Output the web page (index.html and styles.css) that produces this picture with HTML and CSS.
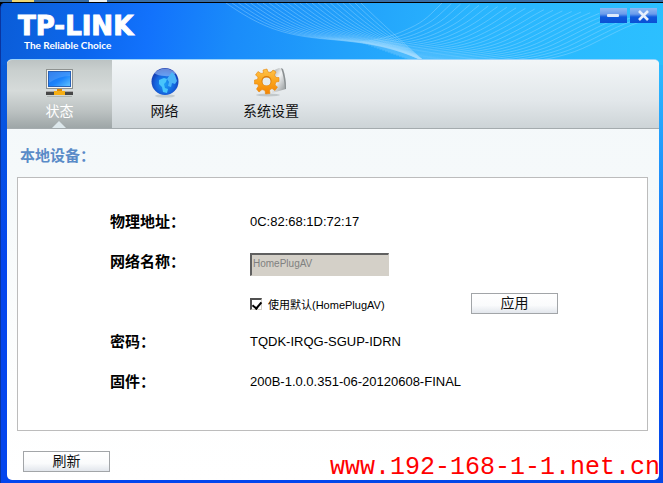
FILE: index.html
```html
<!DOCTYPE html>
<html lang="zh-CN">
<head>
    <meta charset="UTF-8">
    <meta name="viewport" content="width=device-width, initial-scale=1.0">
    <title>TP-LINK</title>
    <link rel="stylesheet" href="styles.css">
</head>
<body>
    <div class="desktop">
        <span class="desktop-icon folder"></span>
        <span class="desktop-icon file"></span>
    </div>

    <div class="window">
        <svg class="waves" id="waves" width="663" height="57" aria-hidden="true"></svg>

        <div class="header">
            <div class="brand">
                <div class="logo">TP-LINK</div>
                <div class="slogan">The Reliable Choice</div>
            </div>
            <div class="window-buttons">
                <button type="button" aria-label="最小化">
                    <svg width="27" height="15" viewBox="0 0 27 15"><rect x="7" y="6" width="12" height="3" rx="1" fill="#dce9fb"/></svg>
                </button>
                <button type="button" aria-label="关闭">
                    <svg width="27" height="15" viewBox="0 0 27 15"><path d="M9 3 L18 12 M18 3 L9 12" stroke="#e6effc" stroke-width="2.6"/></svg>
                </button>
            </div>
        </div>

        <div class="content">
            <div class="tabs">
                <button type="button" class="tab active">
                    <svg width="30" height="32" viewBox="0 0 30 32">
                        <defs>
                            <linearGradient id="screen" x1="0" y1="0" x2="1" y2="1">
                                <stop offset="0" stop-color="#1269e8"/>
                                <stop offset=".55" stop-color="#1d84fb"/>
                                <stop offset="1" stop-color="#63c6ff"/>
                            </linearGradient>
                        </defs>
                        <rect x="1.5" y="2.5" width="26" height="19" fill="#f5f5f2" stroke="#8e9290"/>
                        <rect x="3.5" y="4.5" width="22" height="15" fill="url(#screen)" stroke="#2862b8"/>
                        <path d="M4 5 H25 V9 Q14 9 4 16 Z" fill="#fff" opacity=".14"/>
                        <rect x="12" y="22" width="5" height="3" fill="#d98607"/>
                        <rect x="1" y="24" width="27" height="4" fill="#474747"/>
                        <rect x="1" y="24" width="27" height="1" fill="#a8a8a8"/>
                        <rect x="9" y="24" width="11" height="4" fill="#f6ae14"/>
                        <rect x="2" y="29" width="25" height="1" fill="#8e9592" opacity=".5"/>
                    </svg>
                    <span>状态</span>
                </button>
                <button type="button" class="tab">
                    <svg width="30" height="32" viewBox="0 0 30 32">
                        <defs>
                            <radialGradient id="globe" cx=".5" cy=".6" r=".58">
                                <stop offset="0" stop-color="#1b9df5"/>
                                <stop offset=".6" stop-color="#1565df"/>
                                <stop offset="1" stop-color="#1636aa"/>
                            </radialGradient>
                        </defs>
                        <ellipse cx="15" cy="29" rx="10" ry="1.6" fill="#aeb8bd" opacity=".6"/>
                        <circle cx="15" cy="14.500" r="13.500" fill="url(#globe)"/>
                        <path d="M4 6 Q15 -3 26 6 Q22 10 15 9 Q8 9 4 6Z" fill="#a9ccff" opacity=".55"/>
                        <path d="M9 13 L14 11 L17 12 L16 15 L14 17 L15 21 L18 22 L17 26 L13 25 L12 20 L9 17Z" fill="#48c4fb"/>
                        <path d="M19 9 L22 5 L25 8 L27 14 L25 17 L22 16 L21 20 L18 19 L19 15 L17 12Z" fill="#4bb4f7"/>
                    </svg>
                    <span>网络</span>
                </button>
                <button type="button" class="tab wide">
                    <svg width="34" height="32" viewBox="0 0 34 32">
                        <defs>
                            <linearGradient id="gear" x1="0" y1="0" x2="0" y2="1">
                                <stop offset="0" stop-color="#ffc34a"/>
                                <stop offset=".5" stop-color="#fba41b"/>
                                <stop offset="1" stop-color="#f38405"/>
                            </linearGradient>
                            <linearGradient id="metal" x1="0" y1="0" x2="1" y2="1">
                                <stop offset="0" stop-color="#8c9294"/>
                                <stop offset=".45" stop-color="#f2f4f5"/>
                                <stop offset="1" stop-color="#878c8e"/>
                            </linearGradient>
                        </defs>
                        <ellipse cx="14" cy="28" rx="12" ry="1.500" fill="#aab2b5" opacity=".6"/>
                        <path d="M16 5 L25 1 L29 2 Q32 11 32 22 L18 26 Z" fill="url(#metal)"/>
                        <path d="M27 1 L29 2 Q32 10 32 22 L31 22 Q30 9 27 1Z" fill="#8a9092"/>
                        <g fill="url(#gear)" stroke="#e8870b" stroke-width=".6" transform="translate(-1 0)">
                            <path d="M10.500 6 L10 3 L14 2 L15 5 L18 5.500 L20 3 L23 5 L21.500 8 L23 10.500 L26 10.500 L26 14.500 L23 15 L22 18 L24.500 20 L22 23.500 L19 21.500 L16.500 23 L17 26.500 L12.500 27 L12 23.500 L9 22.500 L6 25 L3.500 22 L5.500 19 L4.500 17 L1.500 17 L1.500 13 L4.500 12.500 L5 10 L2.500 8 L5 4.500 L8 6.500 Z"/>
                        </g>
                        <circle cx="12.500" cy="14" r="5" fill="#d97a08"/>
                        <circle cx="12.500" cy="14.500" r="4" fill="#e6ecee"/>
                    </svg>
                    <span>系统设置</span>
                </button>
            </div>

            <div class="page">
                <h2>本地设备：</h2>

                <div class="panel">
                    <div class="row">
                        <span class="name">物理地址：</span>
                        <span class="value">0C:82:68:1D:72:17</span>
                    </div>
                    <div class="row">
                        <label class="name" for="networkName">网络名称：</label>
                        <input type="text" id="networkName" value="HomePlugAV" disabled>
                    </div>
                    <div class="row">
                        <span class="name"></span>
                        <div class="default-name">
                            <input type="checkbox" id="useDefault" checked>
                            <label for="useDefault">使用默认(HomePlugAV)</label>
                        </div>
                        <button type="button" class="btn">应用</button>
                    </div>
                    <div class="row">
                        <span class="name">密码：</span>
                        <span class="value">TQDK-IRQG-SGUP-IDRN</span>
                    </div>
                    <div class="row">
                        <span class="name">固件：</span>
                        <span class="value">200B-1.0.0.351-06-20120608-FINAL</span>
                    </div>
                </div>

                <div class="footer">
                    <button type="button" class="btn">刷新</button>
                </div>
            </div>
        </div>
    </div>

    <div class="watermark">www.192-168-1-1.net.cn</div>

    <script src="script.js"></script>
</body>
</html>
```

FILE: styles.css
```css
* {
    margin: 0;
    padding: 0;
    box-sizing: border-box;
}
body {
    position: relative;
    display: flex;
    flex-direction: column;
    min-height: 100vh;
    font-family: "Liberation Sans", "Noto Sans CJK SC", sans-serif;
    background-color: #000;
    overflow: hidden;
}
button {
    border: none;
    font-family: inherit;
    cursor: pointer;
}
svg {
    display: block;
}

/* desktop strip behind the window */
.desktop {
    display: flex;
    gap: 55px;
    height: 3px;
    padding-left: 12px;
    background-color: #3a6ea5;
    border-bottom: 1px solid #000;
}
.desktop-icon {
    width: 22px;
    height: 2px;
}
.folder {
    background-color: #f0d873;
}
.file {
    width: 18px;
    background-color: #eef2f2;
}

.window {
    position: relative;
    flex: 1;
    display: flex;
    flex-direction: column;
    padding: 0 4px 3px 6px;
    border-left: 1px solid #0a35a0;
    border-radius: 5px 0 0 0;
    background:
        linear-gradient(100deg, #0a5cd8 0, #0c63e2 50px, #0b66ee 90px, #1272fc 150px, #1a8cfa 235px, #22a2fb 350px, #29b4fe 460px, #2cc0ff 663px) top / 100% 62px no-repeat,
        linear-gradient(180deg, #0a5cd8 60px, #0552e4 140px, #0446ee 260px) left / 50% 100% no-repeat,
        linear-gradient(180deg, #2cb8ff 70px, #1c86fa 200px, #0653f0 340px, #0448e8 100%);
}
.waves {
    position: absolute;
    top: 0;
    left: -1px;
}
.waves path {
    fill: none;
    stroke: #a5dcff;
    stroke-width: 1;
    opacity: 0.38;
}

.header {
    position: relative;
    display: flex;
    justify-content: space-between;
    height: 56px;
    padding: 4px 2px 0 11px;
    color: #fff;
}
.logo {
    margin-top: 5px;
    font-family: "DejaVu Sans", sans-serif;
    font-size: 26px;
    font-weight: bold;
    line-height: 28px;
    -webkit-text-stroke: 1px #fff;
}
.slogan {
    padding-left: 6px;
    font-family: Lato, sans-serif;
    font-size: 10px;
    font-weight: bold;
    line-height: 10px;
}
.window-buttons {
    display: flex;
    gap: 3px;
    padding-top: 1px;
}
.window-buttons button {
    width: 27px;
    height: 15px;
    background: linear-gradient(#8fb8f2 0, #6b9cec 40%, #0e5ade 60%, #0a51d4 100%);
}

.content {
    position: relative;
    flex: 1;
    display: flex;
    flex-direction: column;
    border-top: 1px solid #9bd3fa;
    border-radius: 5px;
    background: linear-gradient(#f4f8fa 0, #f5f9fa 120px, #fdfefe 320px, #fff 100%);
    overflow: hidden;
}
.tabs {
    display: flex;
    height: 69px;
    background: linear-gradient(#f2f6f8 0, #e2e7ea 60%, #cdd4d7 100%);
    border-bottom: 1px solid #a4abae;
}
.tab {
    position: relative;
    display: flex;
    flex-direction: column;
    align-items: center;
    min-width: 105px;
    padding: 7px 12px 0;
    background: none;
    color: #111;
    font-size: 14px;
    line-height: 24px;
}
.tab.wide {
    min-width: 108px;
}
.tab.active {
    background: linear-gradient(#bcc3c3 0, #c9cfce 15%, #d6dbda 45%, #bcc2c2 75%, #9ea6a7 100%);
    color: #fff;
}
.tab.active::after {
    content: "";
    position: absolute;
    bottom: 0;
    left: 45px;
    border: 7px solid transparent;
    border-top: 0;
    border-bottom-color: #dde8ec;
}

.page {
    flex: 1;
    padding: 16px 11px 8px 10px;
}
h2 {
    padding-left: 3px;
    color: #5a8bc8;
    font-size: 15px;
    line-height: 22px;
}
.panel {
    margin-top: 10px;
    padding: 23px 20px 29px 92px;
    background-color: #fff;
    border: 1px solid #bcbcbc;
}
.row {
    display: flex;
    align-items: center;
    height: 40px;
}
.name {
    width: 140px;
    padding-bottom: 2px;
    font-size: 15px;
    font-weight: bold;
}
.value {
    font-size: 13px;
}
.row input[type="text"] {
    width: 139px;
    height: 23px;
    margin-top: 6px;
    padding: 0 0 3px 1px;
    background-color: #d4d0c8;
    border: 1px solid #d4d0c8;
    border-top: 2px solid #606060;
    border-left: 2px solid #606060;
    color: #808080;
    font-family: inherit;
    font-size: 10px;
}
.default-name {
    display: flex;
    align-items: center;
    gap: 6px;
    width: 221px;
    padding-top: 6px;
    font-size: 11px;
}
.default-name label {
    white-space: nowrap;
}
.default-name input {
    appearance: none;
    width: 12px;
    height: 12px;
    border: 1px solid #d4d0c8;
    border-top: 2px solid #505050;
    border-left: 2px solid #505050;
    background-color: #fff;
}
.default-name input:checked::before {
    content: "";
    display: block;
    width: 4px;
    height: 7px;
    margin: 0 0 0 2px;
    border: solid #000;
    border-width: 0 2px 2px 0;
    transform: rotate(40deg);
}
.btn {
    width: 87px;
    height: 21px;
    background: linear-gradient(#fff 0, #fafbfc 60%, #e2e6ec 100%);
    border: 1px solid #a2a5a8;
    color: #111;
    font-size: 14px;
    line-height: 17px;
}
.row .btn {
    margin-top: 5px;
}
.footer {
    display: flex;
    padding: 20px 6px 0;
}

.watermark {
    position: absolute;
    right: 3px;
    bottom: 1px;
    color: #f00;
    font-family: "Liberation Mono", monospace;
    font-size: 25px;
    line-height: 28px;
}
```

FILE: script.js
```javascript
const waves = document.getElementById('waves');

function drawWaves(from, to, count) {
    for (let i = 0; i < count; i++) {
        const t = i / (count - 1);
        const p = from.map((v, k) => (v + (to[k] - v) * t).toFixed(1));
        const path = document.createElementNS('http://www.w3.org/2000/svg', 'path');
        path.setAttribute('d', `M${p[0]} ${p[1]} C${p[2]} ${p[3]} ${p[4]} ${p[5]} ${p[6]} ${p[7]} S${p[8]} ${p[9]} ${p[10]} ${p[11]}`);
        waves.appendChild(path);
    }
}

drawWaves(
    [226, 0, 258, 22, 280, 32, 325, 36, 390, 43, 424, 58],
    [361, 0, 375, 14, 385, 23, 396, 33, 408, 44, 424, 58],
    23
);
drawWaves(
    [360, 39, 385, 36, 395, 32, 410, 25, 430, 12, 442, 0],
    [424, 62, 500, 62, 550, 62, 590, 42, 625, 24, 655, 14],
    24
);
```
